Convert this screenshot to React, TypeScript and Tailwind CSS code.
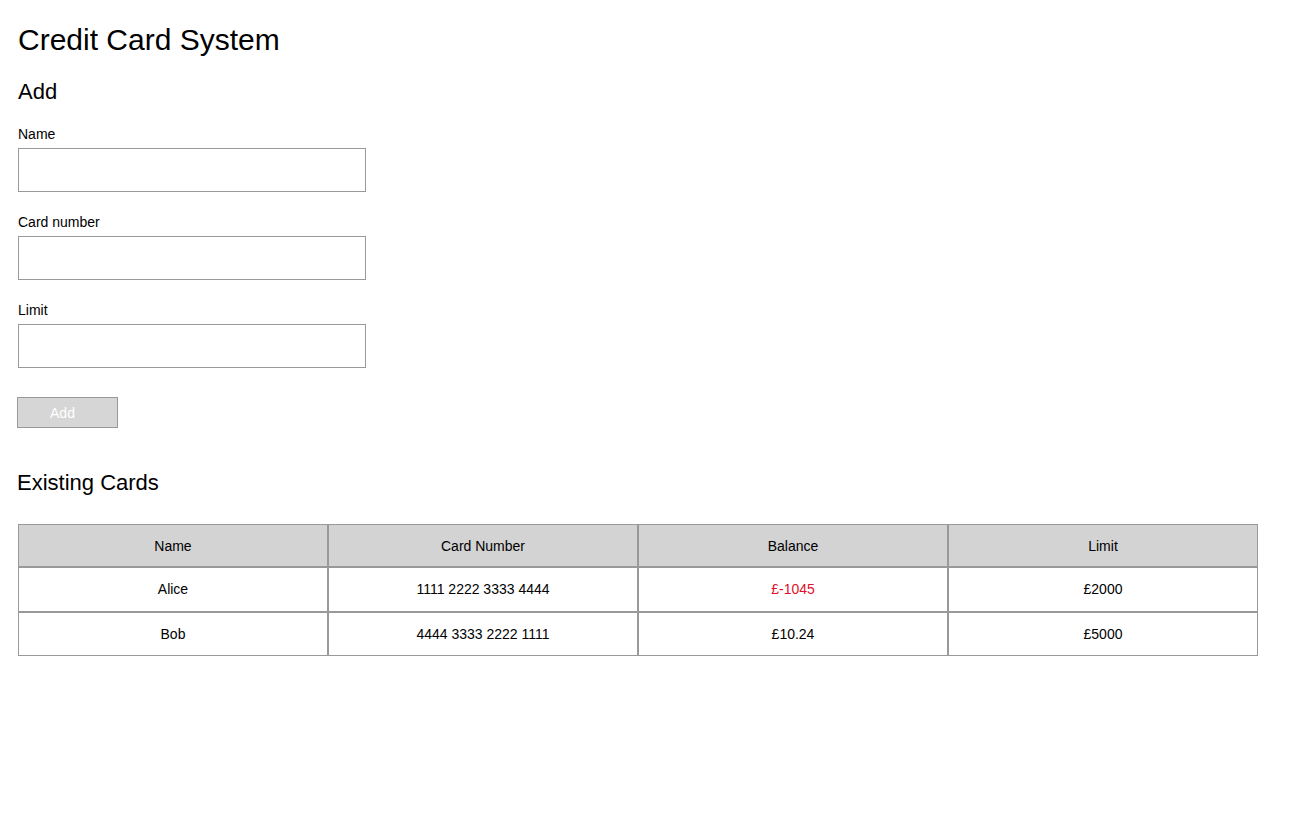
const cards = [
  { name: "Alice", number: "1111 2222 3333 4444", balance: -1045, limit: 2000 },
  { name: "Bob", number: "4444 3333 2222 1111", balance: 10.24, limit: 5000 },
];

const Field = ({ label, first }: { label: string; first?: boolean }) => (
  <div className={first ? "mt-[20px]" : "mt-[22px]"}>
    <label className="block text-[14px] leading-[16px] text-black">{label}</label>
    <input
      type="text"
      className="mt-[6px] block w-[348px] h-[44px] border border-[#999999] bg-white outline-none px-2"
    />
  </div>
);

export default function App() {
  return (
    <div className="min-h-screen bg-white text-black pl-[18px] pt-[20px]" style={{ fontFamily: '"Liberation Sans", Arial, sans-serif' }}>
      <h1 className="text-[30px] leading-[40px] font-normal">Credit Card System</h1>

      <h2 className="mt-[18px] text-[22px] leading-[28px] font-normal">Add</h2>
      <Field label="Name" first />
      <Field label="Card number" />
      <Field label="Limit" />
      <button
        disabled
        className="mt-[29px] -ml-px block w-[101px] h-[31px] pr-[10px] bg-[#d6d6d6] border border-[#999999] text-white text-[14px] leading-[16px]"
      >
        Add
      </button>

      <h2 className="mt-[41px] -ml-px text-[22px] leading-[28px] font-normal">Existing Cards</h2>

      <table className="mt-[27px] w-[1240px] border-separate border-spacing-0 text-[14px] table-fixed">
        <thead>
          <tr>
            {["Name", "Card Number", "Balance", "Limit"].map((h) => (
              <th key={h} className="h-[43px] pt-px border border-[#999999] bg-[#d3d3d3] font-normal text-center">
                {h}
              </th>
            ))}
          </tr>
        </thead>
        <tbody>
          {cards.map((c, i) => (
            <tr key={c.name}>
              <td className={`${i === 0 ? "h-[45px] pb-px" : "h-[44px]"} border border-[#999999] text-center`}>{c.name}</td>
              <td className="border border-[#999999] text-center">{c.number}</td>
              <td className={`border border-[#999999] text-center ${c.balance < 0 ? "text-[#e0102c]" : ""}`}>£{c.balance}</td>
              <td className="border border-[#999999] text-center">£{c.limit}</td>
            </tr>
          ))}
        </tbody>
      </table>
    </div>
  );
}
